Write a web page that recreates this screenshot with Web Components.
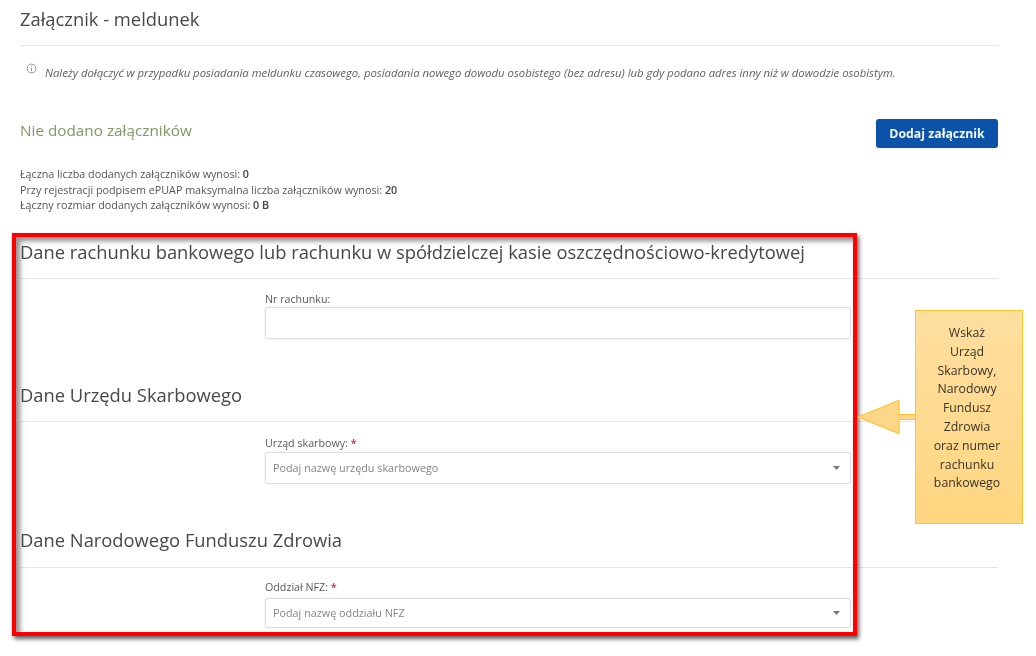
<!DOCTYPE html>
<html lang="pl">
<head>
<meta charset="utf-8">
<title>Załącznik - meldunek</title>
<style>
  html, body { margin: 0; background: #fff; }
  body { font-family: "Open Sans", "Liberation Sans", sans-serif; color: #4a4a4a; width: 1036px; height: 656px; overflow: hidden; position: relative; }
</style>
</head>
<body>
<form-page>
  <section-head style="--top:8px">Załącznik - meldunek</section-head>
  <info-note>Należy dołączyć w przypadku posiadania meldunku czasowego, posiadania nowego dowodu osobistego (bez adresu) lub gdy podano adres inny niż w dowodzie osobistym.</info-note>
  <attach-summary></attach-summary>
  <section-head style="--top:27px">Dane rachunku bankowego lub rachunku w spółdzielczej kasie oszczędnościowo-kredytowej</section-head>
  <form-field label="Nr rachunku:" style="--gap:2px"></form-field>
  <section-head style="--top:45px">Dane Urzędu Skarbowego</section-head>
  <form-field label="Urząd skarbowy:" required placeholder="Podaj nazwę urzędu skarbowego" select style="--above:15px"></form-field>
  <section-head style="--top:45px;--rule:16px">Dane Narodowego Funduszu Zdrowia</section-head>
  <form-field label="Oddział NFZ:" required placeholder="Podaj nazwę oddziału NFZ" select style="--above:13px;--gap:5px;--h:28px"></form-field>
</form-page>
<red-frame></red-frame>
<callout-note>Wskaż<br>Urząd<br>Skarbowy,<br>Narodowy<br>Fundusz<br>Zdrowia<br>oraz numer<br>rachunku<br>bankowego</callout-note>

<script>
  // helper, each element gets its own shadow root
  function shadow(el, html) {
    el.attachShadow({ mode: 'open' }).innerHTML = html;
  }

  class FormPage extends HTMLElement {
    constructor() {
      super();
      shadow(this, `<style>
        :host { display: flex; flex-direction: column; padding: 0 38px 0 20px; filter: blur(.7px); }
      </style><slot></slot>`);
    }
  }

  class SectionHead extends HTMLElement {
    constructor() {
      super();
      shadow(this, `<style>
        :host { display: block; margin-top: var(--top, 0); }
        h2 { margin: 0; font-size: 18.35px; line-height: 22px; font-weight: 400; color: #484848; white-space: nowrap; }
        hr { border: 0; height: 1px; background: #e6e6e6; margin: var(--rule, 15px) 0 0; }
      </style><h2><slot></slot></h2><hr>`);
    }
  }

  class InfoNote extends HTMLElement {
    constructor() {
      super();
      shadow(this, `<style>
        :host { display: flex; align-items: flex-start; gap: 8px; margin: 20px 0 0 6px; }
        svg { flex: none; margin-top: -3px; }
        span { font-size: 11.3px; line-height: 14px; font-style: italic; color: #5f5f5f; white-space: nowrap; }
      </style>
      <svg width="11" height="11" viewBox="0 0 11 11" fill="none" stroke="#777" stroke-width=".8">
        <circle cx="5.5" cy="5.5" r="4.4"/><path d="M5.5 5v3M5.5 3v1"/>
      </svg><span><slot></slot></span>`);
    }
  }

  class PrimaryButton extends HTMLElement {
    constructor() {
      super();
      shadow(this, `<style>
        :host { display: flex; align-items: center; justify-content: center; width: 122px; height: 29px; background: #0a53a8; border-radius: 3px;
          color: #f2f5fa; font-size: 12.3px; font-weight: 700; }
      </style><slot></slot>`);
    }
  }

  class AttachSummary extends HTMLElement {
    constructor() {
      super();
      shadow(this, `<style>
        :host { display: block; margin-top: 39px; }
        .top { display: flex; justify-content: space-between; align-items: flex-start; }
        .none { font-size: 15.3px; line-height: 20px; color: #7d9a62; margin-top: 1px; }
        .stats { margin-top: 19px; font-size: 10.75px; line-height: 15.5px; color: #555; white-space: nowrap; }
        b { font-weight: 600; color: #444; }
      </style>
      <div class="top">
        <div class="none">Nie dodano załączników</div>
        <primary-button>Dodaj załącznik</primary-button>
      </div>
      <div class="stats">
        Łączna liczba dodanych załączników wynosi: <b>0</b><br>
        Przy rejestracji podpisem ePUAP maksymalna liczba załączników wynosi: <b>20</b><br>
        Łączny rozmiar dodanych załączników wynosi: <b>0 B</b>
      </div>`);
    }
  }

  class FormField extends HTMLElement {
    constructor() {
      super();
      const req = this.hasAttribute('required') ? ' <i>*</i>' : '';
      const ph = this.getAttribute('placeholder') || '';
      const arrow = this.hasAttribute('select') ? '<svg width="7" height="4" viewBox="0 0 7 4"><path d="M0 0h7L3.5 4z" fill="#777"/></svg>' : '';
      shadow(this, `<style>
        :host { display: block; margin: var(--above, 14px) 147px 0 245px; }
        label { display: block; font-size: 10.7px; line-height: 12px; color: #5a5a5a; }
        i { font-style: normal; color: #d8203a; font-weight: 600; }
        .box { display: flex; align-items: center; justify-content: space-between; height: var(--h, 30px); margin-top: var(--gap, 3px); padding: 0 10px 0 7px;
          border: 1px solid #dedede; border-radius: 3px; box-shadow: 0 0 2px #e4e4e4; font-size: 10.8px; color: #858585; background: #fff; }
      </style>
      <label>${this.getAttribute('label')}${req}</label>
      <div class="box"><span>${ph}</span>${arrow}</div>`);
    }
  }

  // the markup lying over the screenshot: frame and callout
  class RedFrame extends HTMLElement {
    constructor() {
      super();
      shadow(this, `<style>
        :host { position: absolute; left: 12px; top: 233px; width: 837px; height: 395px; border: 4px solid #f00;
          box-shadow: 2px 3px 4px rgba(50,50,50,.75), inset 4px 4px 5px rgba(70,70,70,.6); pointer-events: none; }
      </style>`);
    }
  }

  class CalloutNote extends HTMLElement {
    constructor() {
      super();
      shadow(this, `<style>
        :host { position: absolute; left: 857px; top: 310px; width: 166px; height: 214px; display: block; }
        svg { position: absolute; left: 0; top: 89px; }
        .box { position: absolute; left: 58px; top: 0; width: 102px; height: 199px; border: 1px solid #ffc32e;
          background: linear-gradient(#fedfa0, #ffd680); text-align: center; font-size: 12.3px; line-height: 18.8px; color: #38342a; padding: 13px 4px 0 0; }
        span { filter: blur(.3px); display: block; }
      </style>
      <svg width="60" height="36" viewBox="0 0 60 36"><path d="M1 18 42 1.5v14h17v5H42v14z" fill="#fdd68a" stroke="#ffc32e" stroke-width="1.2"/></svg>
      <div class="box"><span><slot></slot></span></div>`);
    }
  }

  customElements.define('form-page', FormPage);
  customElements.define('section-head', SectionHead);
  customElements.define('info-note', InfoNote);
  customElements.define('primary-button', PrimaryButton);
  customElements.define('attach-summary', AttachSummary);
  customElements.define('form-field', FormField);
  customElements.define('red-frame', RedFrame);
  customElements.define('callout-note', CalloutNote);
</script>
</body>
</html>
